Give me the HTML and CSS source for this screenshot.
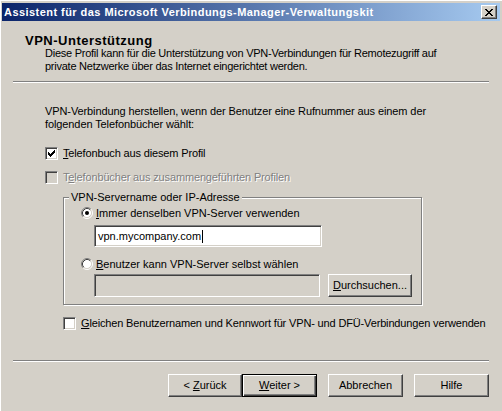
FILE: index.html
```
<!DOCTYPE html>
<html lang="de">
<head>
<meta charset="utf-8">
<title>Assistent</title>
<link rel="stylesheet" href="styles.css">
</head>
<body>
<div class="window">
  <div class="titlebar">
    <span class="title">Assistent für das Microsoft Verbindungs-Manager-Verwaltungskit</span>
    <span class="close"><svg width="8" height="7" viewBox="0 0 8 7"><path fill="#000" d="M0 0h2v1h-2z M6 0h2v1h-2z M1 1h2v1h-2z M5 1h2v1h-2z M2 2h4v1h-4z M3 3h2v1h-2z M2 4h4v1h-4z M1 5h2v1h-2z M5 5h2v1h-2z M0 6h2v1h-2z M6 6h2v1h-2z"/></svg></span>
  </div>

  <div class="heading">VPN-Unterstützung</div>
  <div class="desc">Diese Profil kann für die Unterstützung von VPN-Verbindungen für Remotezugriff auf<br>private Netzwerke über das Internet eingerichtet werden.</div>
  <div class="sep sep-top"></div>

  <div class="intro">VPN-Verbindung herstellen, wenn der Benutzer eine Rufnummer aus einem der<br>folgenden Telefonbücher wählt:</div>

  <div class="check check1">
    <span class="cb"><svg width="11" height="11" viewBox="0 0 11 11"><path fill="#000" d="M2 4h1v3h-1z M3 5h1v3h-1z M4 6h1v3h-1z M5 5h1v3h-1z M6 4h1v3h-1z M7 3h1v3h-1z M8 2h1v3h-1z"/></svg></span>
    <span class="label"><u>T</u>elefonbuch aus diesem Profil</span>
  </div>
  <div class="check check2">
    <span class="cb cb-disabled"></span>
    <span class="label disabled">T<u>e</u>lefonbücher aus zusammengeführten Profilen</span>
  </div>

  <div class="group">
    <div class="legend">VPN-Servername oder IP-Adresse</div>
    <div class="radio-row radio1">
      <svg class="radio" width="12" height="12" viewBox="0 0 12 12">
        <circle cx="6" cy="6" r="4.5" fill="#fff"/>
        <path d="M2.11 9.89 A5.5 5.5 0 0 1 9.89 2.11" fill="none" stroke="#808080"/>
        <path d="M9.89 2.11 A5.5 5.5 0 0 1 2.11 9.89" fill="none" stroke="#fff"/>
        <path d="M2.82 9.18 A4.5 4.5 0 0 1 9.18 2.82" fill="none" stroke="#404040"/>
        <path d="M9.18 2.82 A4.5 4.5 0 0 1 2.82 9.18" fill="none" stroke="#D4D0C8"/>
        <circle cx="6" cy="6" r="2" fill="#000"/>
      </svg>
      <span class="label"><u>I</u>mmer denselben VPN-Server verwenden</span>
    </div>
    <div class="field field-main"><span class="field-text">vpn.mycompany.com</span><span class="caret"></span></div>
    <div class="radio-row radio2">
      <svg class="radio" width="12" height="12" viewBox="0 0 12 12">
        <circle cx="6" cy="6" r="4.5" fill="#fff"/>
        <path d="M2.11 9.89 A5.5 5.5 0 0 1 9.89 2.11" fill="none" stroke="#808080"/>
        <path d="M9.89 2.11 A5.5 5.5 0 0 1 2.11 9.89" fill="none" stroke="#fff"/>
        <path d="M2.82 9.18 A4.5 4.5 0 0 1 9.18 2.82" fill="none" stroke="#404040"/>
        <path d="M9.18 2.82 A4.5 4.5 0 0 1 2.82 9.18" fill="none" stroke="#D4D0C8"/>
      </svg>
      <span class="label"><u>B</u>enutzer kann VPN-Server selbst wählen</span>
    </div>
    <div class="browse-row">
      <div class="field field-disabled"></div>
      <div class="btn btn-browse"><span><u>D</u>urchsuchen...</span></div>
    </div>
  </div>

  <div class="check check3">
    <span class="cb"></span>
    <span class="label"><u>G</u>leichen Benutzernamen und Kennwort für VPN- und DFÜ-Verbindungen verwenden</span>
  </div>

  <div class="sep sep-bottom"></div>

  <div class="buttons">
    <div class="btn btn-back"><span>&lt; <u>Z</u>urück</span></div>
    <div class="btn btn-default"><span><u>W</u>eiter &gt;</span></div>
    <div class="btn btn-cancel"><span>Abbrechen</span></div>
    <div class="btn btn-help"><span>Hilfe</span></div>
  </div>
</div>
</body>
</html>
```

FILE: styles.css
```
* { box-sizing: border-box; }
html, body { margin: 0; padding: 0; }
body {
  background: #D4D0C8;
  font-family: "Liberation Sans", Arial, sans-serif;
  font-size: 11px;
  color: #000;
}
u { text-decoration: underline; text-underline-offset: 1px; }

.window {
  width: 502px;
  height: 411px;
  background: #D4D0C8;
  padding-top: 3px;
  box-shadow: inset 1px 1px #fff;
  overflow: hidden;
}

.titlebar {
  margin: 0 2px;
  height: 18px;
  background: linear-gradient(to right, #0A246A, #A6CAF0);
  display: flex;
  align-items: center;
  justify-content: space-between;
  padding: 0 3px 0 2px;
}
.title {
  color: #fff;
  font-weight: bold;
  font-size: 11px;
  line-height: 13px;
  white-space: nowrap;
  letter-spacing: 0.45px;
}
.close {
  width: 16px;
  height: 14px;
  background: #D4D0C8;
  border: 1px solid;
  border-color: #fff #404040 #404040 #fff;
  box-shadow: inset -1px -1px #808080;
  display: flex;
  align-items: center;
  justify-content: center;
}
.close svg { display: block; }

.heading {
  margin: 14px 0 0 25px;
  font-size: 13px;
  font-weight: bold;
  line-height: 12px;
  letter-spacing: 0.5px;
}
.desc {
  margin-left: 45px;
  line-height: 13px;
  white-space: nowrap;
  letter-spacing: -0.25px;
}
.sep {
  margin-left: 13px;
  width: 476px;
  height: 2px;
  border-top: 1px solid #808080;
  border-bottom: 1px solid #fff;
}
.sep-top { margin-top: 8px; }
.intro {
  margin: 22px 0 0 45px;
  line-height: 13px;
  white-space: nowrap;
  letter-spacing: -0.1px;
}

.check {
  display: flex;
  align-items: center;
  gap: 5px;
  height: 13px;
  line-height: 13px;
  white-space: nowrap;
  letter-spacing: -0.15px;
}
.check1 { margin: 16px 0 0 45px; }
.check2 { margin: 11px 0 0 45px; }
.check3 { margin: 12px 0 0 63px; }

.cb {
  width: 13px;
  height: 13px;
  flex: none;
  border: 1px solid;
  border-color: #808080 #fff #fff #808080;
  box-shadow: inset 1px 1px #404040, inset -1px -1px #D4D0C8;
  background: #fff;
}
.cb svg { display: block; }
.cb-disabled { background: #D4D0C8; }

.disabled {
  color: #808080;
  text-shadow: 1px 1px 0 #fff;
}

.group {
  margin: 13px 0 0 63px;
  width: 359px;
  border: 1px solid #808080;
  box-shadow: inset 1px 1px #fff, 1px 1px #fff;
  padding: 0 0 7px 0;
}
.legend {
  width: fit-content;
  margin: -7px 0 0 5px;
  padding: 0 2px;
  background: #D4D0C8;
  line-height: 13px;
  white-space: nowrap;
}
.radio-row {
  display: flex;
  align-items: center;
  gap: 3px;
  height: 12px;
  line-height: 13px;
  margin-left: 17px;
  white-space: nowrap;
}
.radio { display: block; flex: none; }
.radio1 { margin-top: 3px; }
.radio2 { margin-top: 11px; }

.field {
  height: 22px;
  border: 1px solid;
  border-color: #808080 #fff #fff #808080;
  box-shadow: inset 1px 1px #404040, inset -1px -1px #D4D0C8;
  background: #fff;
  display: flex;
  align-items: center;
  padding-left: 3px;
}
.field-main {
  margin: 6px 0 0 30px;
  width: 228px;
}
.field-text { line-height: 13px; }
.caret {
  width: 1px;
  height: 13px;
  background: #000;
  margin-left: 1px;
}
.browse-row {
  display: flex;
  gap: 8px;
  margin: 4px 0 0 30px;
}
.field-disabled {
  width: 226px;
  height: 23px;
  background: #D4D0C8;
}

.btn {
  height: 23px;
  border: 1px solid;
  border-color: #fff #404040 #404040 #fff;
  box-shadow: inset -1px -1px #808080, inset 1px 1px #D4D0C8;
  display: flex;
  align-items: center;
  justify-content: center;
  line-height: 13px;
  white-space: nowrap;
}
.btn-browse { width: 84px; }

.sep-bottom { margin-top: 30px; }

.buttons {
  display: flex;
  margin: 12px 0 0 168px;
}
.btn-back { width: 74px; }
.btn-default {
  width: 75px;
  border: 1px solid #000;
  box-shadow: inset 1px 1px #fff, inset -1px -1px #404040, inset -2px -2px #808080;
}
.btn-cancel { width: 75px; margin-left: 11px; }
.btn-help { width: 75px; margin-left: 11px; }
```
